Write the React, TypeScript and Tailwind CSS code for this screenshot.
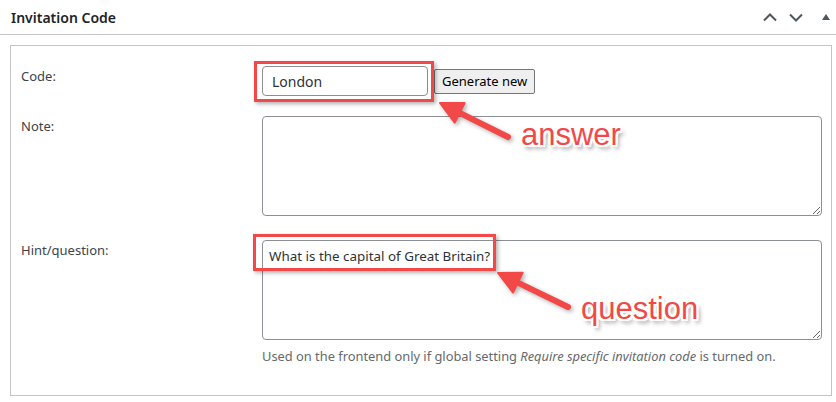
import React from 'react'

const font = { fontFamily: '"Segoe UI", "Noto Sans", sans-serif' }

function Arrow({ x1, y1, x2, y2 }: { x1: number; y1: number; x2: number; y2: number }) {
  // red arrow from tail (x1,y1) to tip (x2,y2)
  const ang = Math.atan2(y2 - y1, x2 - x1)
  const len = 22
  const w = 11
  const bx = x2 - Math.cos(ang) * len
  const by = y2 - Math.sin(ang) * len
  const px = -Math.sin(ang) * w
  const py = Math.cos(ang) * w
  return (
    <g>
      <line x1={x1} y1={y1} x2={bx} y2={by} stroke="#f24848" strokeWidth="6" strokeLinecap="round" />
      <polygon points={`${x2},${y2} ${bx + px},${by + py} ${bx - px},${by - py}`} fill="#f24848" stroke="#f24848" strokeWidth="2" strokeLinejoin="round" />
    </g>
  )
}

export default function App() {
  return (
    <div className="relative w-[836px] h-[402px] bg-white overflow-hidden text-[#3c434a]" style={font}>
      <div className="flex items-center justify-between h-[35px] border-b border-[#c3c4c7] pl-[11px] pr-[3px]">
        <h2 className="text-[14px] font-semibold text-[#1d2327]">Invitation Code</h2>
        <div className="flex items-center text-[#50575e]">
          <svg width="26" height="20" viewBox="0 0 26 20" fill="none" stroke="currentColor" strokeWidth="2">
            <path d="M7 13.5l6-6 6 6" />
          </svg>
          <svg width="26" height="20" viewBox="0 0 26 20" fill="none" stroke="currentColor" strokeWidth="2">
            <path d="M7 7.5l6 6 6-6" />
          </svg>
          <svg width="24" height="20" viewBox="0 0 24 20" fill="currentColor">
            <path d="M13 13l4-6 4 6z" />
          </svg>
        </div>
      </div>

      <div className="mt-[10px] ml-[10px] mr-[4px] h-[351px] border border-[#c3c4c7] pl-[10px] pt-[20px]">
        <div className="flex">
          <label className="w-[241px] text-[13px] leading-[20px]">Code:</label>
          <div className="flex items-center">
            <div className="relative">
              <input
                readOnly
                value="London"
                className="w-[166px] h-[30px] px-[9px] border border-[#8c8f94] rounded-[4px] text-[14px] text-[#2c3338] outline-none"
                style={font}
              />
              <div className="absolute -left-[8px] -top-[5px] -right-[6px] -bottom-[6px] border-[3px] border-[#f24848] shadow-[2px_2px_4px_rgba(0,0,0,0.3)]" />
            </div>
            <button className="ml-[6px] h-[25px] px-[7px] bg-[#efefef] border border-[#767676] rounded-[2px] text-[13px] text-black leading-none" style={font}>
              Generate new
            </button>
          </div>
        </div>

        <div className="flex mt-[20px]">
          <label className="w-[241px] text-[13px] leading-[20px]">Note:</label>
          <textarea readOnly className="w-[560px] h-[100px] border border-[#8c8f94] rounded-[4px] outline-none resize-y" />
        </div>

        <div className="flex mt-[24px]">
          <label className="w-[241px] text-[13px] leading-[20px]">Hint/question:</label>
          <div>
            <div className="relative">
              <textarea
                readOnly
                value="What is the capital of Great Britain?"
                className="block w-[560px] h-[100px] px-[6px] py-[2px] border border-[#8c8f94] rounded-[4px] text-[13.4px] leading-[26px] text-[#2c3338] outline-none resize-y"
                style={font}
              />
              <div className="absolute -left-[9px] -top-[6px] w-[243px] h-[37px] border-[3px] border-[#f24848] shadow-[2px_2px_4px_rgba(0,0,0,0.3)]" />
            </div>
            <p className="mt-[6px] text-[12.85px] leading-[20px] text-[#646970]">
              Used on the frontend only if global setting <em>Require specific invitation code</em> is turned on.
            </p>
          </div>
        </div>
      </div>

      <svg className="absolute inset-0 pointer-events-none" width="836" height="402" style={{ filter: 'drop-shadow(2px 2px 2px rgba(0,0,0,0.3))' }}>
        <Arrow x1={508} y1={137} x2={440} y2={103} />
        <Arrow x1={568} y1={307} x2={498} y2={273} />
      </svg>

      <span className="absolute left-[521px] top-[119px] text-[31px] leading-none text-[#f24848] [font-family:'Liberation_Sans',Arial,sans-serif] [text-shadow:-2px_-2px_0_#fff,2px_-2px_0_#fff,-2px_2px_0_#fff,2px_2px_0_#fff,0_-2px_0_#fff,0_2px_0_#fff,-2px_0_0_#fff,2px_0_0_#fff,3px_4px_4px_rgba(0,0,0,0.45)]">
        answer
      </span>
      <span className="absolute left-[581px] top-[293px] text-[31px] leading-none text-[#f24848] [font-family:'Liberation_Sans',Arial,sans-serif] [text-shadow:-2px_-2px_0_#fff,2px_-2px_0_#fff,-2px_2px_0_#fff,2px_2px_0_#fff,0_-2px_0_#fff,0_2px_0_#fff,-2px_0_0_#fff,2px_0_0_#fff,3px_4px_4px_rgba(0,0,0,0.45)]">
        question
      </span>
    </div>
  )
}
